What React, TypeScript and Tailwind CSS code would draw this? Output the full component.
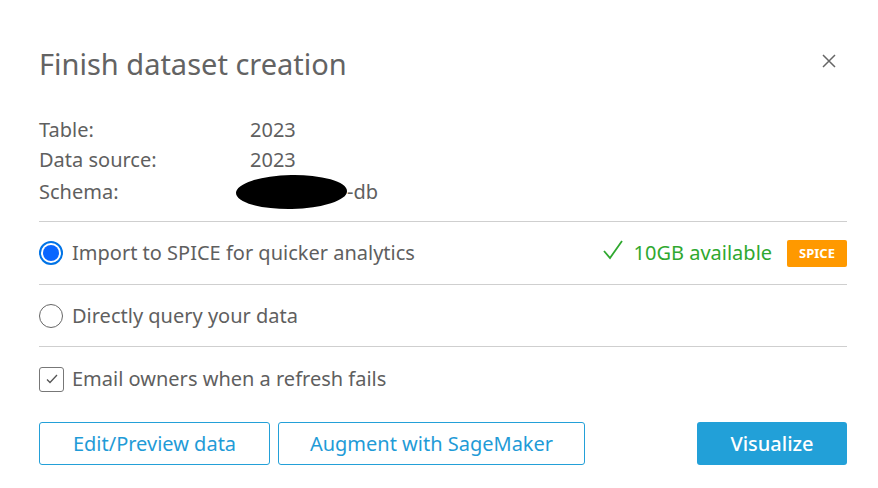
import React from 'react';

const font = { fontFamily: '"Noto Sans", "Open Sans", Arial, sans-serif' };

function Radio({ checked }: { checked: boolean }) {
  return checked ? (
    <span className="w-6 h-6 rounded-full border-2 border-[#0073e6] flex items-center justify-center shrink-0">
      <span className="w-4 h-4 rounded-full bg-[#0a66ff]" />
    </span>
  ) : (
    <span className="w-6 h-6 rounded-full border border-[#666] shrink-0" />
  );
}

export default function App() {
  return (
    <div className="w-[878px] h-[488px] bg-white text-[#5f5f5f]" style={font}>
      <div className="pl-[39px] pr-[31px] pt-[44px]">
        {/* header */}
        <div className="flex items-start justify-between">
          <h1 className="text-[29px] leading-[40px] text-[#636363] font-normal">Finish dataset creation</h1>
          <button className="mt-[10px] mr-[11px] text-[#666]">
            <svg width="14" height="14" viewBox="0 0 14 14" fill="none" stroke="currentColor" strokeWidth="1.5">
              <path d="M1 1l12 12M13 1L1 13" />
            </svg>
          </button>
        </div>

        {/* details */}
        <div className="mt-[31px] text-[20px] leading-[30px]">
          <div className="flex"><span className="w-[211px]">Table:</span><span>2023</span></div>
          <div className="flex"><span className="w-[211px]">Data source:</span><span>2023</span></div>
          <div className="flex items-center">
            <span className="w-[197px]">Schema:</span>
            <span className="w-[111px] h-[34px] bg-black rounded-[50%] -rotate-1" />
            <span>-db</span>
          </div>
        </div>

        {/* options */}
        <div className="mt-[12px] w-[808px] text-[20px]">
          <div className="border-t border-[#cfcfcf] h-[63px] flex items-center justify-between">
            <label className="flex items-center gap-[9px]">
              <Radio checked />
              <span>Import to SPICE for quicker analytics</span>
            </label>
            <div className="flex items-center">
              <svg width="22" height="22" viewBox="0 0 22 22" fill="none" stroke="#2fa82f" strokeWidth="1.8" className="mr-[10px] -mt-[6px]">
                <path d="M2 12l6 7L20 2" />
              </svg>
              <span className="text-[#2fa82f]">10GB available</span>
              <span className="ml-[15px] bg-[#ff9900] text-white text-[13px] font-bold rounded-[2px] px-[12px] h-[27px] leading-[27px]">SPICE</span>
            </div>
          </div>
          <div className="border-t border-[#cfcfcf] h-[62px] flex items-center">
            <label className="flex items-center gap-[9px]">
              <Radio checked={false} />
              <span>Directly query your data</span>
            </label>
          </div>
          <div className="border-t border-[#cfcfcf] pt-[17px] flex items-center gap-[8px]">
            <span className="w-[25px] h-[25px] border border-[#777] rounded-[3px] flex items-center justify-center shrink-0">
              <svg width="12" height="10" viewBox="0 0 12 10" fill="none" stroke="#555" strokeWidth="1.3">
                <path d="M1 5.5l3 3L11 1" />
              </svg>
            </span>
            <span>Email owners when a refresh fails</span>
          </div>
        </div>

        {/* actions */}
        <div className="mt-[28px] w-[808px] flex items-center text-[20px]">
          <button className="w-[231px] h-[43px] border border-[#23a0d8] rounded-[3px] text-[#1f9bd7]">Edit/Preview data</button>
          <button className="ml-[8px] w-[307px] h-[43px] border border-[#23a0d8] rounded-[3px] text-[#1f9bd7]">Augment with SageMaker</button>
          <button className="ml-auto w-[150px] h-[43px] bg-[#22a0d8] rounded-[3px] text-white font-medium">Visualize</button>
        </div>
      </div>
    </div>
  );
}
